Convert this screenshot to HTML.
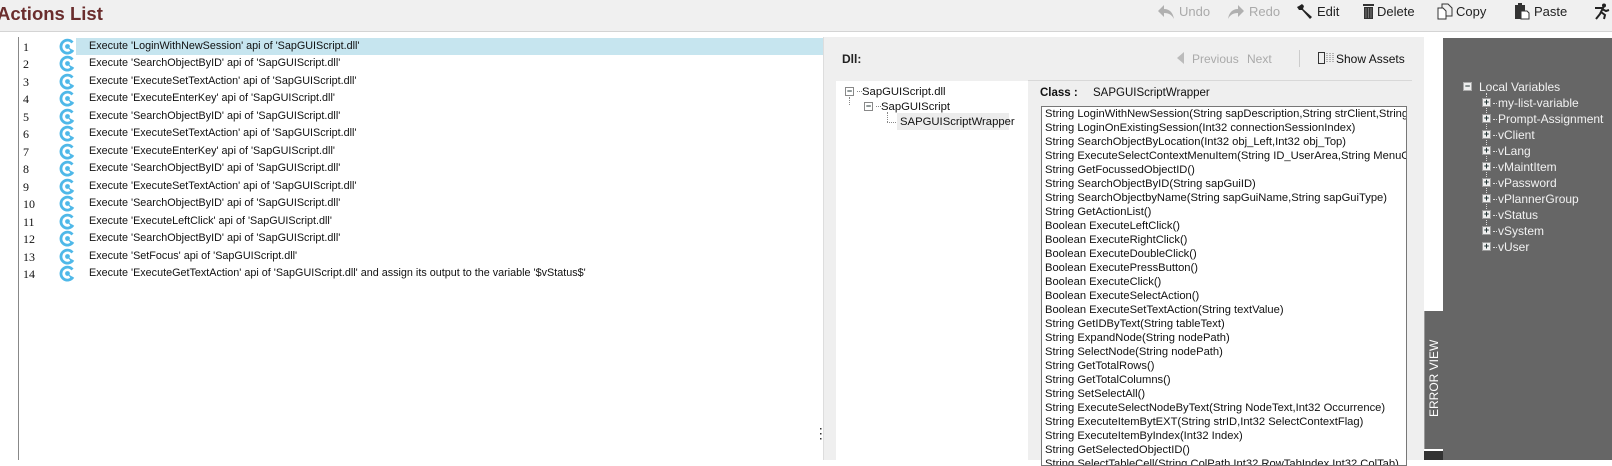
<!DOCTYPE html>
<html><head><meta charset="utf-8"><style>
*{margin:0;padding:0;box-sizing:border-box}
body{width:1612px;height:460px;overflow:hidden;background:#fff;font-family:"Liberation Sans",Arial,sans-serif;position:relative}
.abs{position:absolute}
#hdr{left:0;top:0;width:1612px;height:32px;background:#f0f0f0;border-bottom:1px solid #d4d4d4}
#title{left:-3px;top:3px;font-size:18.5px;font-weight:bold;color:#6a2d2d}
.tb{top:4px;font-size:13px;color:#222;white-space:nowrap}
.tb.dis{color:#aaa}
#left{left:18px;top:37px;width:805px;height:423px;border-left:1px solid #888;background:#fff}
.row{position:absolute;left:0;height:17px;width:805px;font-size:10.8px;color:#111}
.row .n{position:absolute;left:4px;top:2px;font-family:"Liberation Serif",serif;font-size:12px}
.row .ic{position:absolute;left:40px;top:0}
.row .t{position:absolute;left:70px;top:2px;white-space:nowrap}
.row.sel .hl{position:absolute;left:57px;top:0;width:747px;height:17px;background:#c6e5ef}
#mid{left:823px;top:37px;width:601px;height:423px;background:#efefef;border-left:1px solid #ddd}
#tree{left:836px;top:81px;width:192px;height:379px;background:#fff}
#cls{left:1041px;top:106px;width:366px;height:360px;background:#fff;border:1px solid #777;overflow:hidden}
#cls div{font-size:11.2px;height:14px;line-height:14px;padding-left:3px;white-space:nowrap;color:#111}
#dark{left:1443px;top:38px;width:169px;height:422px;background:#666}
.var{position:absolute;font-size:12px;color:#f2f2f2;white-space:nowrap}
.box{display:inline-block;width:9px;height:9px;background:#eee;border:1px solid #999;position:absolute;font-size:9px;line-height:7px;text-align:center;color:#233;font-weight:bold}
</style></head><body>
<div id="hdr" class="abs"></div>
<div id="title" class="abs">Actions List</div>
<svg class="abs" style="left:1157px;top:4px" width="18" height="16" viewBox="0 0 18 16"><path d="M7 1 L1 7 L7 13 L7 9 C12 9 15 11 17 15 C16 9 13 5 7 5 Z" fill="#b0b0b0"/></svg>
<div class="abs tb dis" style="left:1179px">Undo</div>
<svg class="abs" style="left:1227px;top:4px" width="18" height="16" viewBox="0 0 18 16"><path d="M11 1 L17 7 L11 13 L11 9 C6 9 3 11 1 15 C2 9 5 5 11 5 Z" fill="#b0b0b0"/></svg>
<div class="abs tb dis" style="left:1249px">Redo</div>
<svg class="abs" style="left:1297px;top:3px" width="16" height="16" viewBox="0 0 16 16"><path d="M2 3 L5 1 L7 3 L6 6 L15 14 L13 16 L5 7 L2 7 L0 4 Z" fill="#222"/></svg>
<div class="abs tb" style="left:1317px">Edit</div>
<svg class="abs" style="left:1363px;top:4px" width="11" height="15" viewBox="0 0 11 15"><rect x="0" y="0" width="11" height="2" fill="#333"/><rect x="1" y="3" width="9" height="12" fill="#333"/><path d="M3 4v10M5.5 4v10M8 4v10" stroke="#888" stroke-width="0.8"/></svg>
<div class="abs tb" style="left:1377px">Delete</div>
<svg class="abs" style="left:1437px;top:3px" width="16" height="17" viewBox="0 0 16 17"><path d="M5 1h6l4 4v8h-10z" fill="none" stroke="#333"/><path d="M1 5h5l3 3v8h-8z" fill="#fff" stroke="#333"/></svg>
<div class="abs tb" style="left:1456px">Copy</div>
<svg class="abs" style="left:1514px;top:3px" width="16" height="17" viewBox="0 0 16 17"><path d="M1 2h10v14h-10z" fill="#333"/><rect x="4" y="0" width="4" height="3" fill="#333"/><path d="M7 8h6l2 2v6h-8z" fill="#fff" stroke="#333"/></svg>
<div class="abs tb" style="left:1534px">Paste</div>
<svg class="abs" style="left:1592px;top:3px" width="18" height="17" viewBox="0 0 18 17"><circle cx="12" cy="2.5" r="2" fill="#222"/><path d="M3 5 L11 5 L8 11 L4 16 M9 9 L13 12 L12 16 M10 6 L14 8 L17 7" stroke="#222" stroke-width="2" fill="none"/></svg>

<div id="left" class="abs">
<div class="row sel" style="top:1px"><div class="hl"></div><span class="n">1</span><svg class="ic" width="17" height="17" viewBox="0 0 17 17"><path d="M13.5 4.5 A6.5 6.5 0 1 0 14 12" fill="none" stroke="#4fb8e8" stroke-width="2.8"/><circle cx="8.5" cy="8.5" r="2.4" fill="#4fb8e8"/><path d="M8.5 8.5 L15 13 L12 14 Z" fill="#4fb8e8"/></svg><span class="t">Execute 'LoginWithNewSession' api of 'SapGUIScript.dll'</span></div>
</div>
<script>
var L=["SearchObjectByID","ExecuteSetTextAction","ExecuteEnterKey","SearchObjectByID","ExecuteSetTextAction","ExecuteEnterKey","SearchObjectByID","ExecuteSetTextAction","SearchObjectByID","ExecuteLeftClick","SearchObjectByID","SetFocus"];
var ic='<svg class="ic" width="17" height="17" viewBox="0 0 17 17"><path d="M13.5 4.5 A6.5 6.5 0 1 0 14 12" fill="none" stroke="#4fb8e8" stroke-width="2.8"/><circle cx="8.5" cy="8.5" r="2.4" fill="#4fb8e8"/><path d="M8.5 8.5 L15 13 L12 14 Z" fill="#4fb8e8"/></svg>';
var h='';
for(var i=0;i<13;i++){var t=i<12?"Execute '"+L[i]+"' api of 'SapGUIScript.dll'":"Execute 'ExecuteGetTextAction' api of 'SapGUIScript.dll' and assign its output to the variable '$vStatus$'";
h+='<div class="row" style="top:'+(1+(i+1)*17.46)+'px"><span class="n">'+(i+2)+'</span>'+ic+'<span class="t">'+t+'</span></div>';}
document.getElementById('left').innerHTML+=h;
</script>

<div id="mid" class="abs"></div>
<svg class="abs" style="left:819px;top:428px" width="4" height="14"><rect x="1" y="0" width="1.5" height="1.5" fill="#333"/><rect x="1" y="5" width="1.5" height="1.5" fill="#333"/><rect x="1" y="10" width="1.5" height="1.5" fill="#333"/></svg>
<div class="abs" style="left:842px;top:52px;font-size:12px;font-weight:bold;color:#222">Dll:</div>
<svg class="abs" style="left:1177px;top:52px" width="8" height="12"><path d="M7 0 L0 6 L7 12Z" fill="#bbb"/></svg>
<div class="abs" style="left:1192px;top:52px;font-size:12px;color:#aaa">Previous</div>
<div class="abs" style="left:1247px;top:52px;font-size:12px;color:#aaa">Next</div>
<div class="abs" style="left:1299px;top:50px;width:1px;height:17px;background:#ccc"></div>
<svg class="abs" style="left:1318px;top:52px" width="16" height="12"><rect x="0.5" y="0.5" width="6" height="11" fill="none" stroke="#333"/><path d="M9 1v10M12 1v10M15 1v10" stroke="#777" stroke-dasharray="1 1"/></svg>
<div class="abs" style="left:1336px;top:52px;font-size:12px;color:#111">Show Assets</div>
<div class="abs" style="left:1028px;top:80px;width:384px;height:1px;background:#d8d8d8"></div>
<div id="tree" class="abs"></div>
<div class="abs box" style="left:845px;top:87px;background:#fff;border-color:#888">−</div>
<div class="abs" style="left:857px;top:91px;width:5px;border-top:1px dotted #888"></div>
<div class="abs" style="left:862px;top:86px;font-size:11.3px;color:#111">SapGUIScript.dll</div>
<div class="abs" style="left:849px;top:97px;height:8px;border-left:1px dotted #888"></div>
<div class="abs box" style="left:864px;top:102px;background:#fff;border-color:#888">−</div>
<div class="abs" style="left:876px;top:106px;width:5px;border-top:1px dotted #888"></div>
<div class="abs" style="left:881px;top:101px;font-size:11.3px;color:#111">SapGUIScript</div>
<div class="abs" style="left:887px;top:112px;height:10px;border-left:1px dotted #888"></div>
<div class="abs" style="left:887px;top:122px;width:11px;border-top:1px dotted #888"></div>
<div class="abs" style="left:897px;top:113px;width:112px;height:17px;background:#ececec"></div>
<div class="abs" style="left:900px;top:116px;font-size:11.3px;color:#111">SAPGUIScriptWrapper</div>
<div class="abs" style="left:1040px;top:87px;font-size:11.5px;font-weight:bold;color:#111">Class :</div>
<div class="abs" style="left:1093px;top:87px;font-size:11.5px;color:#111">SAPGUIScriptWrapper</div>
<div id="cls" class="abs">
<div>String LoginWithNewSession(String sapDescription,String strClient,String user)</div>
<div>String LoginOnExistingSession(Int32 connectionSessionIndex)</div>
<div>String SearchObjectByLocation(Int32 obj_Left,Int32 obj_Top)</div>
<div>String ExecuteSelectContextMenuItem(String ID_UserArea,String MenuCode)</div>
<div>String GetFocussedObjectID()</div>
<div>String SearchObjectByID(String sapGuiID)</div>
<div>String SearchObjectbyName(String sapGuiName,String sapGuiType)</div>
<div>String GetActionList()</div>
<div>Boolean ExecuteLeftClick()</div>
<div>Boolean ExecuteRightClick()</div>
<div>Boolean ExecuteDoubleClick()</div>
<div>Boolean ExecutePressButton()</div>
<div>Boolean ExecuteClick()</div>
<div>Boolean ExecuteSelectAction()</div>
<div>Boolean ExecuteSetTextAction(String textValue)</div>
<div>String GetIDByText(String tableText)</div>
<div>String ExpandNode(String nodePath)</div>
<div>String SelectNode(String nodePath)</div>
<div>String GetTotalRows()</div>
<div>String GetTotalColumns()</div>
<div>String SetSelectAll()</div>
<div>String ExecuteSelectNodeByText(String NodeText,Int32 Occurrence)</div>
<div>String ExecuteItemBytEXT(String strID,Int32 SelectContextFlag)</div>
<div>String ExecuteItemByIndex(Int32 Index)</div>
<div>String GetSelectedObjectID()</div>
<div>String SelectTableCell(String ColPath,Int32 RowTabIndex,Int32 ColTab)</div>
</div>
<div class="abs" style="left:1424px;top:37px;width:19px;height:274px;background:#fff"></div>
<div class="abs" style="left:1424px;top:311px;width:19px;height:138px;background:#666;border-left:1px solid #999"></div>
<div class="abs" style="left:1424px;top:449px;width:19px;height:2px;background:#fff"></div>
<div class="abs" style="left:1424px;top:451px;width:19px;height:9px;background:#333"></div>
<div class="abs" style="left:1427px;top:417px;transform:rotate(-90deg);transform-origin:0 0;font-size:12px;color:#fff;white-space:nowrap">ERROR VIEW</div>
<div id="dark" class="abs"></div>
<div class="abs box" style="left:1463px;top:82px;border-color:#aaa">−</div>
<div class="var" style="left:1479px;top:80px">Local Variables</div>
<div class="abs" style="left:1486px;top:93px;height:134px;border-left:1px dotted #ddd"></div>
<div id="vars"></div>
<script>
var V=["my-list-variable","Prompt-Assignment","vClient","vLang","vMaintItem","vPassword","vPlannerGroup","vStatus","vSystem","vUser"],s='';
for(var i=0;i<V.length;i++){var y=96+i*16;s+='<div class="box" style="left:1482px;top:'+(y+2)+'px">+</div><div class="abs" style="left:1493px;top:'+(y+7)+'px;width:4px;border-top:1px dotted #ddd"></div><div class="var" style="left:1498px;top:'+y+'px">'+V[i]+'</div>';}
document.getElementById('vars').innerHTML=s;
</script>
</body></html>
